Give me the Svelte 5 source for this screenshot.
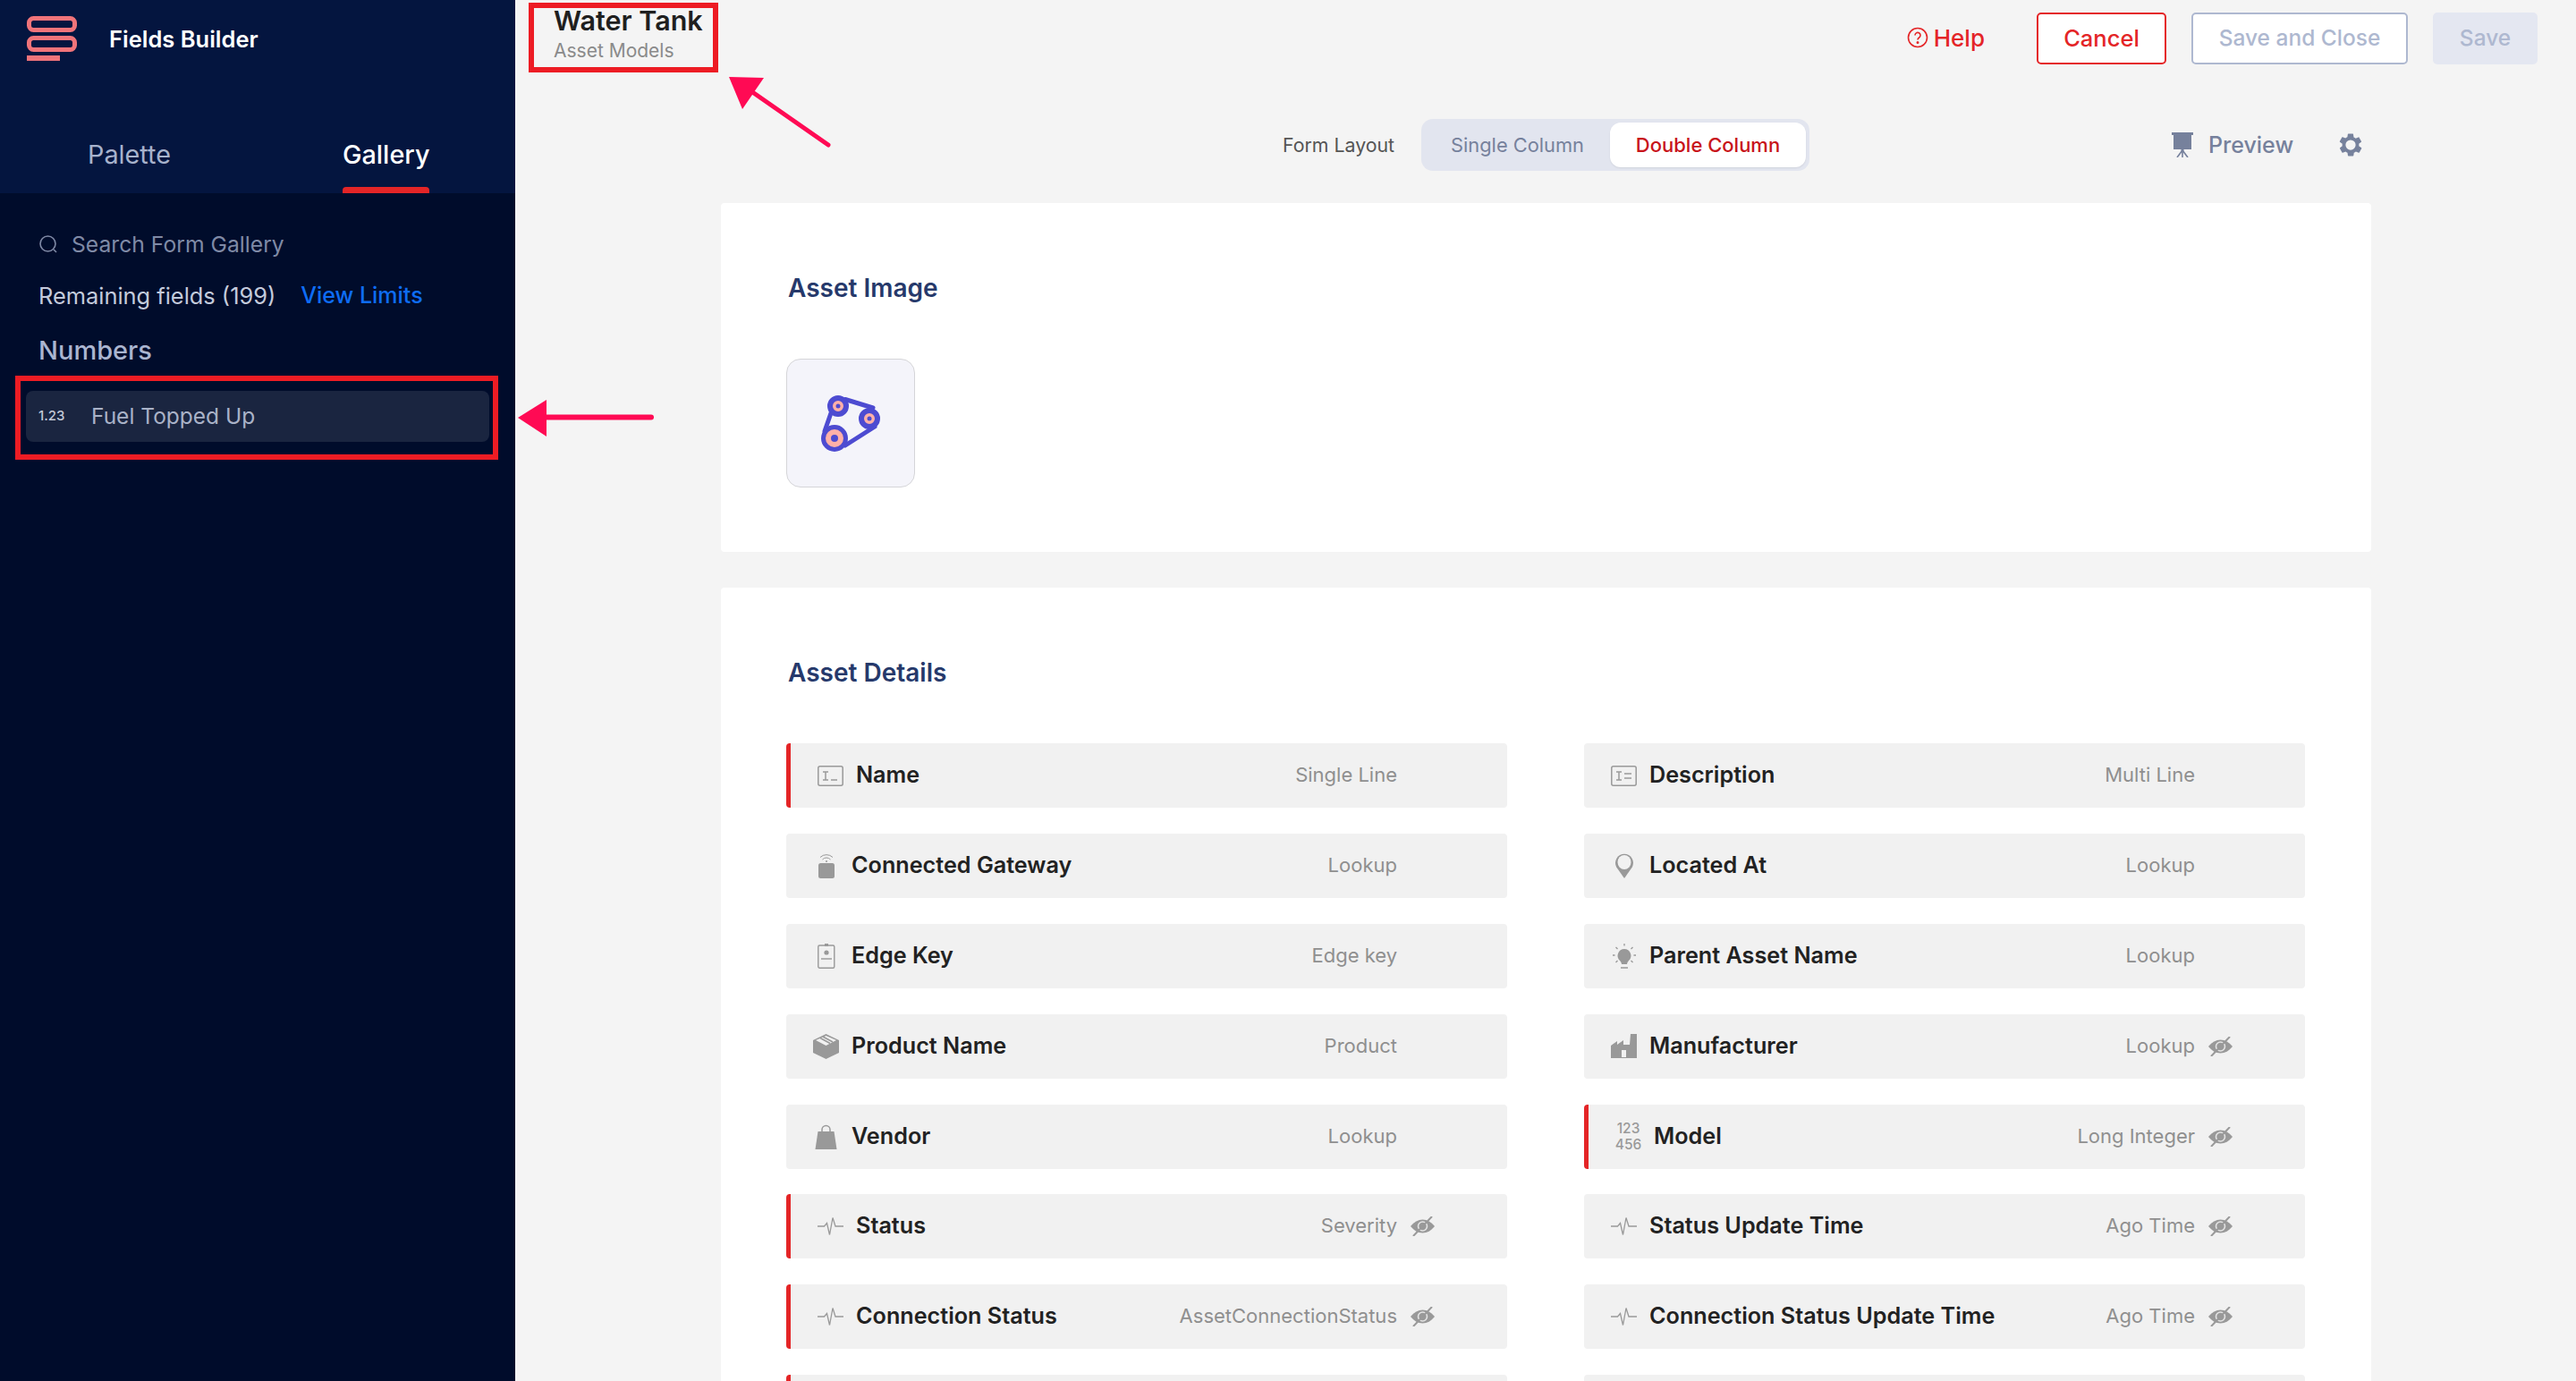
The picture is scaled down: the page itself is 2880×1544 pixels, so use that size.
<script>
  const left = [
    { n: 'Name', t: 'Single Line', i: 'line', r: true },
    { n: 'Connected Gateway', t: 'Lookup', i: 'gateway' },
    { n: 'Edge Key', t: 'Edge key', i: 'badge' },
    { n: 'Product Name', t: 'Product', i: 'box' },
    { n: 'Vendor', t: 'Lookup', i: 'bag' },
    { n: 'Status', t: 'Severity', i: 'pulse', r: true, h: true },
    { n: 'Connection Status', t: 'AssetConnectionStatus', i: 'pulse', r: true, h: true },
    { n: '', t: '', i: '', r: true }
  ];
  const right = [
    { n: 'Description', t: 'Multi Line', i: 'multi' },
    { n: 'Located At', t: 'Lookup', i: 'pin' },
    { n: 'Parent Asset Name', t: 'Lookup', i: 'bulb' },
    { n: 'Manufacturer', t: 'Lookup', i: 'factory', h: true },
    { n: 'Model', t: 'Long Integer', i: 'num', r: true, h: true },
    { n: 'Status Update Time', t: 'Ago Time', i: 'pulse', h: true },
    { n: 'Connection Status Update Time', t: 'Ago Time', i: 'pulse', h: true },
    { n: '', t: '', i: '' }
  ];
  const rows = left.flatMap((l, k) => [l, right[k]]);
</script>

<div class="app">
  <aside class="side">
    <div class="side-top">
      <div class="brand">
        <svg class="logo" width="56" height="50" viewBox="0 0 56 50" fill="none">
          <rect x="2.5" y="2.5" width="51" height="13" rx="5" stroke="#f1747a" stroke-width="5" />
          <rect x="2.5" y="24.5" width="51" height="13" rx="5" stroke="#f1747a" stroke-width="5" />
          <rect x="0" y="44" width="37" height="6" fill="#f1747a" />
        </svg>
        <span class="brand-name">Fields Builder</span>
      </div>
      <div class="tabs">
        <span class="tab">Palette</span>
        <span class="tab on">Gallery</span>
      </div>
    </div>
    <div class="side-body">
      <div class="search">
        <svg width="22" height="22" viewBox="0 0 22 22" fill="none" stroke="#7f8aa6" stroke-width="1.6">
          <circle cx="10.5" cy="10.5" r="8.5" /><path d="M17 17l3 3" />
        </svg>
        <span>Search Form Gallery</span>
      </div>
      <div class="remain"><span>Remaining fields (199)</span><span class="limits">View Limits</span></div>
      <div class="numbers">Numbers</div>
      <div class="item"><span class="num123">1.23</span><span>Fuel Topped Up</span></div>
    </div>
  </aside>

  <main class="main">
    <header class="head">
      <div class="title">
        <div class="title-main">Water Tank</div>
        <div class="title-sub">Asset Models</div>
      </div>
      <div class="actions">
        <span class="help">
          <svg width="24" height="24" viewBox="0 0 24 24" fill="none" stroke="#e42527" stroke-width="1.6">
            <circle cx="12" cy="12" r="10.5" />
            <path d="M9 9.5a3 3 0 1 1 4.6 2.5c-1 .7-1.6 1.2-1.6 2.4" />
            <circle cx="12" cy="17.6" r=".7" fill="#e42527" />
          </svg>
          Help
        </span>
        <button class="btn cancel">Cancel</button>
        <button class="btn close">Save and Close</button>
        <button class="btn save">Save</button>
      </div>
    </header>

    <div class="layout-bar">
      <span class="layout-label">Form Layout</span>
      <div class="toggle">
        <span class="opt">Single Column</span>
        <span class="opt sel">Double Column</span>
      </div>
      <div class="preview">
        <svg width="24" height="28" viewBox="0 0 24 28" fill="#76819c">
          <rect x="2" y="2" width="20" height="17" /><rect x="0" y="0" width="24" height="3" /><rect x="10.5" y="18" width="3" height="3" />
          <path d="M12 20l-6 8M12 20l6 8M12 20v8" stroke="#76819c" stroke-width="1.6" fill="none" />
        </svg>
        <span>Preview</span>
      </div>
      <svg class="gear" width="30" height="30" viewBox="0 0 24 24" fill="#76819c">
        <path fill-rule="evenodd" d="M19.4 13c.1-.3.1-.7.1-1s0-.7-.1-1l2.1-1.6c.2-.2.2-.4.1-.6l-2-3.5c-.1-.2-.4-.3-.6-.2l-2.500 1c-.5-.4-1.100-.7-1.700-1l-.4-2.600C14.400 2.200 14.200 2 14 2h-4c-.2 0-.4.2-.5.4l-.4 2.600c-.6.3-1.200.6-1.700 1l-2.500-1c-.2-.1-.5 0-.6.2l-2 3.500c-.1.2-.1.4.1.6L4.600 11c-.1.3-.1.7-.1 1s0 .7.1 1l-2.100 1.600c-.2.2-.2.4-.1.6l2 3.500c.1.2.4.3.6.2l2.500-1c.5.4 1.100.7 1.700 1l.4 2.600c.1.200.3.400.5.400h4c.2 0 .4-.2.5-.4l.4-2.600c.6-.3 1.200-.6 1.700-1l2.500 1c.2.1.5 0 .6-.2l2-3.500c.1-.2.1-.4-.1-.6L19.400 13zM12 16.500a4.500 4.500 0 1 1 0-9 4.500 4.500 0 0 1 0 9z" />
      </svg>
    </div>

    <section class="card card-img">
      <h2>Asset Image</h2>
      <div class="thumb">
        <svg width="66" height="63" viewBox="0 0 66 63" fill="none">
          <path d="M27 4.500L58 14M12 17L4 40M27 56L60 35" stroke="#4d4bd1" stroke-width="5" stroke-linecap="round" />
          <circle cx="19" cy="12" r="9" fill="#ffb0a8" stroke="#4d4bd1" stroke-width="6" />
          <circle cx="19" cy="12" r="2.500" fill="#4d4bd1" />
          <circle cx="54" cy="26" r="9" fill="#ffb0a8" stroke="#4d4bd1" stroke-width="6" />
          <circle cx="54" cy="26" r="2.500" fill="#4d4bd1" />
          <circle cx="15" cy="48" r="12.500" fill="#ffb0a8" stroke="#4d4bd1" stroke-width="5" />
          <circle cx="15" cy="48" r="4" fill="#4d4bd1" />
        </svg>
      </div>
    </section>

    <section class="card card-det">
      <h2>Asset Details</h2>
      <div class="grid">
        {#each rows as f}
          <div class="row" class:req={f.r}>
            <span class="ico">
              {#if f.i === 'line'}
                <svg width="29" height="23" viewBox="0 0 29 23" fill="none" stroke="#999" stroke-width="1.500">
                  <rect x=".8" y=".8" width="27.400" height="21.400" rx="2" />
                  <path d="M6 7h6M9 7v9M6 16h6M15 16h7" />
                </svg>
              {:else if f.i === 'multi'}
                <svg width="29" height="23" viewBox="0 0 29 23" fill="none" stroke="#999" stroke-width="1.500">
                  <rect x=".8" y=".8" width="27.400" height="21.400" rx="2" />
                  <path d="M6 7h6M9 7v9M6 16h6M15 9h8M15 14h8" />
                </svg>
              {:else if f.i === 'gateway'}
                <svg width="18" height="28" viewBox="0 0 18 28">
                  <rect x="0" y="11" width="18" height="17" rx="2.500" fill="#999" />
                  <path d="M2 4.500a10 10 0 0 1 14 0M4.500 7a6 6 0 0 1 9 0" fill="none" stroke="#999" stroke-width="1" />
                  <circle cx="9" cy="9" r="1" fill="#999" />
                </svg>
              {:else if f.i === 'badge'}
                <svg width="20" height="28" viewBox="0 0 20 28" fill="none" stroke="#999" stroke-width="1.400">
                  <rect x=".8" y="2" width="18" height="25.300" rx="1.500" />
                  <rect x="8" y="0" width="4" height="3" fill="#999" stroke="none" />
                  <circle cx="10" cy="10" r="2.600" fill="#999" stroke="none" />
                  <path d="M4 17h12" />
                </svg>
              {:else if f.i === 'box'}
                <svg width="29" height="28" viewBox="0 0 29 28">
                  <path d="M0 7L14.500 0 29 7v14L14.500 28 0 21z" fill="#999" />
                  <path d="M3 7l11.500 6L26 7 14.500 2z" fill="#f1f1f1" />
                  <path d="M8 4.500l11 6M11 3l11 6" stroke="#999" stroke-width="1.500" />
                </svg>
              {:else if f.i === 'bag'}
                <svg width="25" height="28" viewBox="0 0 25 28">
                  <path d="M3.500 8h18l3 20H.500z" fill="#999" />
                  <path d="M8 10V6a4.500 4.500 0 0 1 9 0v4" fill="none" stroke="#999" stroke-width="1.500" />
                </svg>
              {:else if f.i === 'pulse'}
                <svg width="29" height="20" viewBox="0 0 29 20" fill="none" stroke="#999" stroke-width="1.300">
                  <path d="M0 10h7.500l3-3.500 3 13 3.500-19 3 9.500h9" />
                </svg>
              {:else if f.i === 'pin'}
                <svg width="20" height="28" viewBox="0 0 20 28">
                  <path d="M10 28L1.200 15.500A10 10 0 1 1 18.800 15.500z" fill="#999" />
                  <ellipse cx="10" cy="10" rx="7.500" ry="8" fill="#f1f1f1" />
                </svg>
              {:else if f.i === 'bulb'}
                <svg width="26" height="28" viewBox="0 0 26 28">
                  <path d="M13 6a7.500 7.500 0 0 0-5 13c1.300 1.300 1.800 2.500 2 4h6c.2-1.500.7-2.700 2-4A7.500 7.500 0 0 0 13 6z" fill="#999" />
                  <path d="M9 27h8M13 0v2.500M3.500 4l2 2M22.500 4l-2 2M0 13h2.500M26 13h-2.500M3.500 21l2-2M22.500 21l-2-2" stroke="#999" stroke-width="1.300" />
                </svg>
              {:else if f.i === 'factory'}
                <svg width="29" height="27" viewBox="0 0 29 27">
                  <path fill-rule="evenodd" d="M0 13l7-5v4l7-5v5h7l1-12h7v27H0zM12 18h5v8h-5z" fill="#999" />
                </svg>
              {:else if f.i === 'num'}
                <span class="num-ico"><span>123</span><span>456</span></span>
              {/if}
            </span>
            <span class="name">{f.n}</span>
            <span class="type">{f.t}</span>
            <span class="eye-slot">
              {#if f.h}
                <svg width="27" height="22" viewBox="0 0 27 22">
                  <path d="M0 11C4 6 8.500 3.500 13.500 3.500S23 6 27 11c-4 5-8.500 7.500-13.500 7.500S4 16 0 11z" fill="#999" />
                  <circle cx="13.500" cy="11" r="5" fill="none" stroke="#e4e4e4" stroke-width="1.600" />
                  <path d="M3 22L24 0" stroke="#999" stroke-width="2" />
                </svg>
              {/if}
            </span>
          </div>
        {/each}
      </div>
    </section>
  </main>

  <div class="mark mark-title"></div>
  <div class="mark mark-item"></div>
  <svg class="arrows" width="2880" height="1544" viewBox="0 0 2880 1544" fill="none">
    <path d="M611 466.500H728" stroke="#ff0a54" stroke-width="6" stroke-linecap="round" />
    <path d="M579 467L611 447V488z" fill="#ff0a54" />
    <path d="M837 100L926 162" stroke="#ff0a54" stroke-width="5" stroke-linecap="round" />
    <path d="M815 86L854 87 830 122z" fill="#ff0a54" />
  </svg>
</div>

<style>
  :global(body) { margin: 0; background: #f4f4f4; }
  .app {
    position: relative;
    display: flex;
    width: 2880px;
    height: 1544px;
    overflow: hidden;
    font-family: Inter, "Noto Sans", sans-serif;
    background: #f4f4f4;
  }
  .side {
    width: 576px;
    flex: none;
    display: flex;
    flex-direction: column;
    background: #000c2b;
  }
  .side-top { height: 216px; background: #04153f; }
  .brand { display: flex; align-items: center; height: 86px; padding-left: 30px; }
  .brand-name { margin-left: 36px; color: #fff; font-size: 25.500px; font-weight: 600; }
  .tabs { display: flex; height: 130px; padding-left: 98px; align-items: stretch; }
  .tab {
    display: flex;
    align-items: center;
    padding-top: 43px;
    box-sizing: border-box;
    height: 130px;
    font-size: 28.800px;
    color: #a7b2cc;
  }
  .tab.on {
    position: relative;
    margin-left: 192px;
    color: #fff;
    font-weight: 500;
  }
  .tab.on::after {
    content: "";
    position: absolute;
    left: 0;
    right: 0;
    bottom: 0;
    height: 7px;
    border-radius: 4px 4px 0 0;
    background: #e42527;
  }
  .side-body { padding: 0 29px; }
  .search { display: flex; align-items: center; gap: 15px; height: 40px; margin-top: 37px; padding-left: 14px; color: #7f8aa6; font-size: 24.700px; }
  .remain { display: flex; gap: 28px; margin-top: 17px; height: 40px; align-items: center; padding-left: 14px; color: #c4cbdc; font-size: 25.400px; }
  .limits { color: #0e6cf5; font-weight: 500; font-size: 25px; }
  .numbers { margin-top: 22px; height: 40px; line-height: 40px; padding-left: 14px; color: #aab5d0; font-size: 29px; font-weight: 500; }
  .item {
    display: flex;
    align-items: center;
    height: 57px;
    box-sizing: border-box;
    padding: 0 0 2px 14px;
    margin-top: 25px;
    border-radius: 8px;
    background: #1a2540;
    color: #a9b2c7;
    font-size: 24.500px;
  }
  .num123 { width: 59px; font-size: 15px; font-weight: 500; color: #c2c8d6; }

  .main { flex: 1; min-width: 0; }
  .head { display: flex; justify-content: space-between; height: 86px; }
  .title { padding: 4px 0 0 43px; }
  .title-main { font-size: 30.500px; font-weight: 600; line-height: 38px; color: #1f1f1f; }
  .title-sub { font-size: 21px; line-height: 28px; margin-top: 1px; color: #8a8a8a; }
  .actions { display: flex; align-items: center; padding: 14px 43px 0 0; align-self: flex-start; height: 58px; }
  .help { display: flex; align-items: center; gap: 6px; padding-bottom: 2px; color: #e42527; font-size: 26px; font-weight: 500; margin-right: 58px; }
  .btn { height: 58px; box-sizing: border-box; border-radius: 5px; font: 500 24.500px Inter, sans-serif; padding: 0 0 2px; }
  .cancel { width: 145px; background: #fff; border: 2px solid #e42527; color: #e42527; font-size: 25.500px; }
  .close { width: 242px; margin-left: 28px; background: #fff; border: 2px solid #aeb8d0; color: #aeb8d0; }
  .save { width: 117px; margin-left: 28px; background: #e4e7f1; border: none; color: #aeb8d0; }

  .layout-bar { position: relative; display: flex; align-items: center; height: 58px; margin-top: 47px; padding-left: 858px; }
  .layout-label { width: 155px; font-size: 21.300px; color: #555; }
  .toggle { display: flex; align-items: center; width: 434px; height: 58px; box-sizing: border-box; padding: 4px; border-radius: 13px; background: #e2e5ef; }
  .opt { width: 207px; text-align: center; font-size: 21.800px; color: #76819c; }
  .opt.sel {
    width: 219px;
    height: 50px;
    line-height: 50px;
    border-radius: 12px;
    background: #fff;
    color: #c8141a;
    font-size: 22px;
    font-weight: 500;
    box-shadow: 0 1px 2px rgba(0, 0, 0, .08);
  }
  .preview { display: flex; align-items: center; gap: 17px; margin-left: 405px; font-size: 25px; font-weight: 500; color: #76819c; }
  .gear { margin-left: 49px; }

  .card { margin: 0 229px 40px 230px; background: #fff; border-radius: 4px; box-sizing: border-box; padding: 0 73px; }
  .card-img { height: 390px; margin-top: 36px; padding-top: 76px; }
  .card h2 { margin: 0; padding-left: 2px; font-size: 28px; font-weight: 600; line-height: 38px; color: #26396b; }
  .thumb {
    display: flex;
    align-items: center;
    justify-content: center;
    width: 144px;
    height: 144px;
    margin-top: 60px;
    box-sizing: border-box;
    border: 1px solid #d5d5d8;
    border-radius: 16px;
    background: #f4f4fa;
  }
  .card-det { padding-top: 76px; padding-bottom: 40px; }
  .grid { display: grid; grid-template-columns: 806px 806px; column-gap: 86px; row-gap: 28.900px; margin-top: 60px; }
  .row {
    display: flex;
    align-items: center;
    height: 72px;
    box-sizing: border-box;
    padding-left: 30px;
    border-radius: 4px;
    background: #f1f1f1;
  }
  .row.req { border-left: 5px solid #e42527; }
  .ico { width: 29px; margin-right: 14px; flex: none; display: flex; justify-content: center; align-items: center; }
  .ico svg { display: block; }
  .name { flex: 1; padding-bottom: 2px; font-size: 25.200px; font-weight: 600; color: #222; white-space: nowrap; }
  .type { padding-bottom: 2px; font-size: 22px; color: #8f8f8f; white-space: nowrap; }
  .eye-slot { width: 123px; flex: none; box-sizing: border-box; padding-left: 15px; display: flex; align-items: center; }
  .num-ico { display: flex; flex-direction: column; align-items: center; font-size: 15.500px; line-height: 18px; font-weight: 500; color: #999; }

  .mark { position: absolute; box-sizing: border-box; border: 6px solid #ed1c24; }
  .mark-title { left: 591px; top: 3px; width: 212px; height: 78px; }
  .mark-item { left: 17px; top: 420px; width: 540px; height: 94px; }
  .arrows { position: absolute; left: 0; top: 0; pointer-events: none; }
</style>
